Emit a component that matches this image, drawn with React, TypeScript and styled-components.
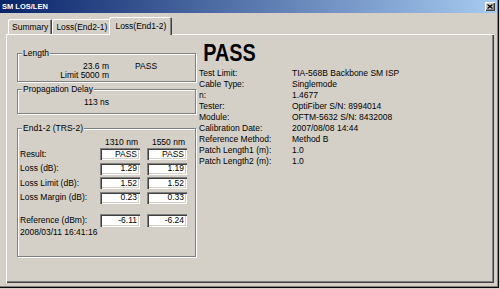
import React from 'react';
import styled, { createGlobalStyle } from 'styled-components';

const GlobalStyle = createGlobalStyle`
  html, body {
    margin: 0;
    padding: 0;
    background: #d4d0c8;
  }
  body {
    font-family: "Liberation Sans", Arial, sans-serif;
    font-size: 8.5px;
    color: #000;
  }
`;

const Window = styled.div`
  width: 500px;
  height: 289px;
  box-sizing: border-box;
  display: flex;
  flex-direction: column;
  background: #d4d0c8;
  box-shadow: inset -1px -1px 0 #d4d0c8, inset -2px -2px 0 #0a0a0a,
    inset -3px -3px 0 #808080;
  overflow: hidden;
`;

const TitleBar = styled.div`
  height: 13px;
  margin-right: 3px;
  display: flex;
  align-items: center;
  justify-content: space-between;
  padding: 0 2px 0 2px;
  background: linear-gradient(to right, #0a246a, #a6caf0);
  color: #fff;
  font-weight: bold;
  font-size: 7.5px;
`;

const CloseButton = styled.div`
  width: 10px;
  height: 9px;
  display: flex;
  align-items: center;
  justify-content: center;
  background: #d4d0c8;
  box-shadow: inset 1px 1px 0 #fff, inset -1px -1px 0 #404040,
    inset -2px -2px 0 #808080;
`;

const Body = styled.div`
  flex: 1;
  display: flex;
  flex-direction: column;
  padding: 4px 6px 6px 6px;
`;

const TabRow = styled.div`
  height: 17px;
  display: flex;
  align-items: flex-end;
  padding-left: 2px;
  position: relative;
  z-index: 1;
`;

const Tab = styled.div<{ $active?: boolean }>`
  height: ${(p) => (p.$active ? 18 : 15)}px;
  margin: ${(p) => (p.$active ? '0 -1px -1px -2px' : '0')};
  padding: 0 ${(p) => (p.$active ? 6 : 4)}px;
  box-sizing: border-box;
  display: flex;
  align-items: center;
  background: #d4d0c8;
  border-radius: 2px 2px 0 0;
  box-shadow: inset 1px 1px 0 #fff, inset -1px 0 0 #404040,
    inset -2px 0 0 #808080;
  font-size: 8.5px;
  white-space: nowrap;
`;

const Panel = styled.div`
  flex: 1;
  display: flex;
  padding: 8px 0 0 11px;
  box-shadow: inset 1px 1px 0 #fff, inset -1px -1px 0 #404040,
    inset -2px -2px 0 #808080;
`;

const LeftCol = styled.div`
  width: 179px;
  padding-top: 11px;
  display: flex;
  flex-direction: column;
`;

const Group = styled.div<{ $h: number; $mt?: number }>`
  position: relative;
  height: ${(p) => p.$h}px;
  margin-top: ${(p) => p.$mt || 0}px;
  box-sizing: border-box;
  border: 1px solid #808080;
  box-shadow: 1px 1px 0 #fff, inset 1px 1px 0 #fff;
  line-height: 9px;
`;

const Caption = styled.span`
  position: absolute;
  top: -5px;
  left: 4px;
  padding: 0 1px;
  background: #d4d0c8;
  line-height: 9px;
`;

const SummaryGrid = styled.div`
  display: grid;
  grid-template-columns: 91px auto;
  column-gap: 26px;
  padding-top: 8px;
`;

const Value = styled.div`
  text-align: right;
`;

const EndBody = styled.div`
  display: flex;
  flex-direction: column;
  padding: 9px 0 0 2px;
`;

const MeasureRow = styled.div<{ $mt?: number; $h?: number }>`
  display: grid;
  grid-template-columns: 73px 40px 40px;
  column-gap: 7px;
  align-items: center;
  margin-top: ${(p) => p.$mt || 0}px;
  height: ${(p) => p.$h || 12}px;
`;

const ColHead = styled.div`
  text-align: right;
  padding-right: 2px;
`;

const Field = styled.div`
  height: 100%;
  box-sizing: border-box;
  background: #fff;
  box-shadow: inset 1px 1px 0 #808080, inset 2px 2px 0 #404040,
    inset -1px -1px 0 #fff, inset -2px -2px 0 #d4d0c8;
  padding: 0 3px 0 0;
  display: flex;
  align-items: center;
  justify-content: flex-end;
`;

const Stamp = styled.div`
  margin-top: 1px;
  line-height: 9px;
`;

const RightCol = styled.div`
  margin-left: 3px;
  display: flex;
  flex-direction: column;
`;

const Verdict = styled.div`
  font-weight: bold;
  font-size: 23px;
  line-height: 23px;
  padding-left: 5px;
  transform: scaleX(0.86);
  transform-origin: left center;
`;

const InfoGrid = styled.div`
  display: grid;
  grid-template-columns: 93px auto;
  line-height: 11px;
  margin-top: 2.5px;
`;

const info: [string, string][] = [
  ['Test Limit:', 'TIA-568B Backbone SM ISP'],
  ['Cable Type:', 'Singlemode'],
  ['n:', '1.4677'],
  ['Tester:', 'OptiFiber S/N: 8994014'],
  ['Module:', 'OFTM-5632 S/N: 8432008'],
  ['Calibration Date:', '2007/08/08 14:44'],
  ['Reference Method:', 'Method B'],
  ['Patch Length1 (m):', '1.0'],
  ['Patch Length2 (m):', '1.0'],
];

const measures: [string, string, string, number][] = [
  ['Result:', 'PASS', 'PASS', 1],
  ['Loss (dB):', '1.29', '1.19', 2.5],
  ['Loss Limit (dB):', '1.52', '1.52', 2.5],
  ['Loss Margin (dB):', '0.23', '0.33', 2.5],
];

const App = () => {
  return (
    <>
      <GlobalStyle />
      <Window>
        <TitleBar>
          <span>SM LOS/LEN</span>
          <CloseButton>
            <svg width="6" height="5" viewBox="0 0 6 5">
              <path d="M0.5 0.5 L5.5 4.5 M5.5 0.5 L0.5 4.5" stroke="#000" strokeWidth="1.3" />
            </svg>
          </CloseButton>
        </TitleBar>
        <Body>
          <TabRow>
            <Tab>Summary</Tab>
            <Tab>Loss(End2-1)</Tab>
            <Tab $active>Loss(End1-2)</Tab>
          </TabRow>
          <Panel>
            <LeftCol>
              <Group $h={29}>
                <Caption>Length</Caption>
                <SummaryGrid>
                  <Value>23.6 m</Value>
                  <div>PASS</div>
                  <Value>Limit 5000 m</Value>
                  <div />
                </SummaryGrid>
              </Group>
              <Group $h={25} $mt={7}>
                <Caption>Propagation Delay</Caption>
                <SummaryGrid>
                  <Value>113 ns</Value>
                  <div />
                </SummaryGrid>
              </Group>
              <Group $h={129} $mt={14}>
                <Caption>End1-2 (TRS-2)</Caption>
                <EndBody>
                  <MeasureRow $h={9}>
                    <div />
                    <ColHead>1310 nm</ColHead>
                    <ColHead>1550 nm</ColHead>
                  </MeasureRow>
                  {measures.map(([label, a, b, mt]) => (
                    <MeasureRow key={label} $mt={mt}>
                      <div>{label}</div>
                      <Field>{a}</Field>
                      <Field>{b}</Field>
                    </MeasureRow>
                  ))}
                  <MeasureRow $mt={10} $h={13}>
                    <div>Reference (dBm):</div>
                    <Field>-6.11</Field>
                    <Field>-6.24</Field>
                  </MeasureRow>
                  <Stamp>2008/03/11 16:41:16</Stamp>
                </EndBody>
              </Group>
            </LeftCol>
            <RightCol>
              <Verdict>PASS</Verdict>
              <InfoGrid>
                {info.map(([k, v]) => (
                  <React.Fragment key={k}>
                    <div>{k}</div>
                    <div>{v}</div>
                  </React.Fragment>
                ))}
              </InfoGrid>
            </RightCol>
          </Panel>
        </Body>
      </Window>
    </>
  );
};

export default App;
